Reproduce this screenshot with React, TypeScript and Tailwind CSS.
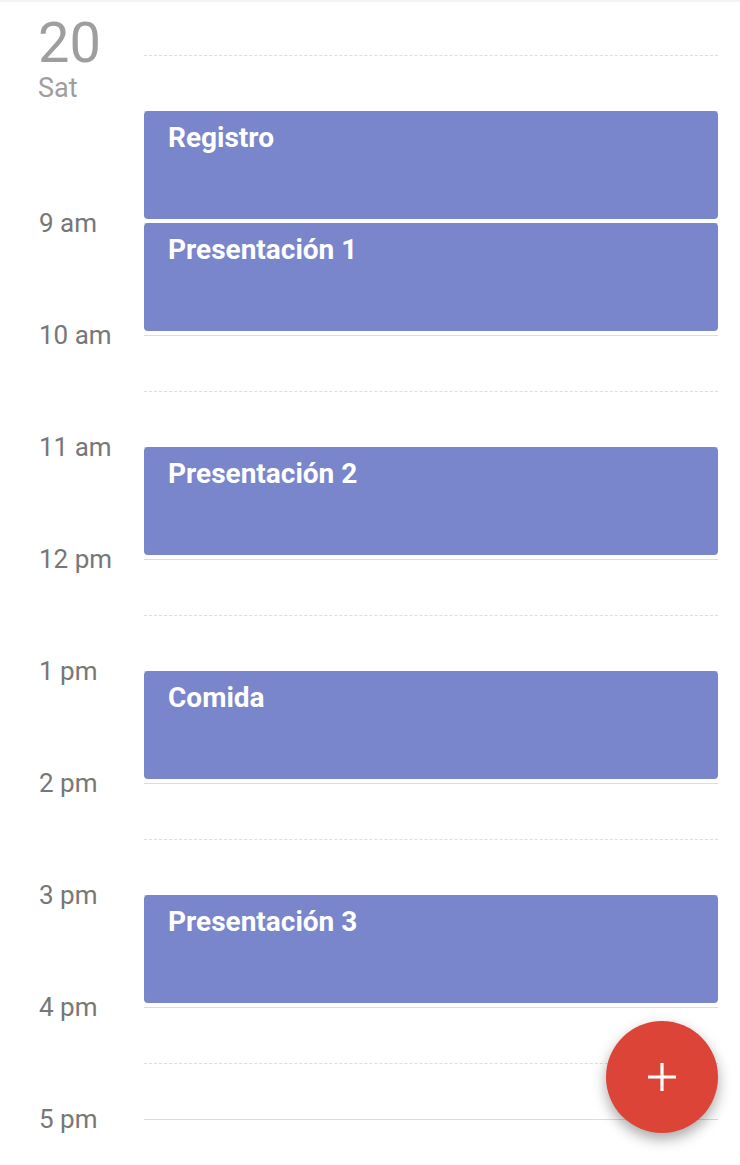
import React from "react";

type Event = { title: string; start: number };

const HOURS = [7, 8, 9, 10, 11, 12, 13, 14, 15, 16, 17, 18];

const EVENTS: Event[] = [
  { title: "Registro", start: 8 },
  { title: "Presentación 1", start: 9 },
  { title: "Presentación 2", start: 11 },
  { title: "Comida", start: 13 },
  { title: "Presentación 3", start: 15 },
];

// las horas tapadas por la cabecera o fuera de pantalla no llevan etiqueta
const label = (h: number) => {
  if (h < 9 || h > 17) return "";
  return h < 12 ? `${h} am` : h === 12 ? "12 pm" : `${h - 12} pm`;
};

const App = () => {
  return (
    <div className="relative w-[740px] h-[1165px] overflow-hidden bg-white font-['Roboto',sans-serif]">
      {/* barra superior */}
      <div className="absolute inset-x-0 top-0 h-[2px] bg-[#f4f4f4] z-20" />

      <div className="flex mt-[-1px]">
        {/* etiquetas de horas */}
        <div className="w-[144px] shrink-0 flex flex-col mt-[-15px]">
          {HOURS.map((h) => (
            <div key={h} className="h-[112px] pl-[39px]">
              <span className="block h-[30px] leading-[30px] text-[26px] text-[#777777]">{label(h)}</span>
            </div>
          ))}
        </div>

        {/* rejilla */}
        <div className="relative w-[574px] flex flex-col">
          {HOURS.map((h) => (
            <React.Fragment key={h}>
              <div className="h-[56px] border-t border-[#dcdcdc]" />
              <div className="h-[56px] border-t border-dashed border-[#dedede]" />
            </React.Fragment>
          ))}

          {EVENTS.map((e) => (
            <div
              key={e.title}
              className="absolute left-0 right-0 h-[108px] rounded-[4px] bg-[#7986cb] px-6 pt-[10px]"
              style={{ top: (e.start - 7) * 112 }}
            >
              <span className="text-[28px] font-bold leading-[34px] text-white">{e.title}</span>
            </div>
          ))}
        </div>
      </div>

      {/* cabecera con el día */}
      <div className="absolute left-0 top-[2px] w-[120px] h-[112px] bg-white z-10 pl-[38px] pt-[13px] flex flex-col">
        <span className="text-[56px] leading-[56px] text-[#9e9e9e]">20</span>
        <span className="text-[27px] leading-[30px] mt-[2px] text-[#9e9e9e]">Sat</span>
      </div>

      {/* botón flotante */}
      <button className="absolute right-[22px] bottom-[32px] w-[112px] h-[112px] rounded-full bg-[#db4437] flex items-center justify-center shadow-[0_6px_14px_rgba(0,0,0,0.35)]">
        <svg width="30" height="30" viewBox="0 0 30 30">
          <path d="M15 1v28M1 15h28" stroke="white" strokeWidth="3.2" />
        </svg>
      </button>
    </div>
  );
};

export default App;
